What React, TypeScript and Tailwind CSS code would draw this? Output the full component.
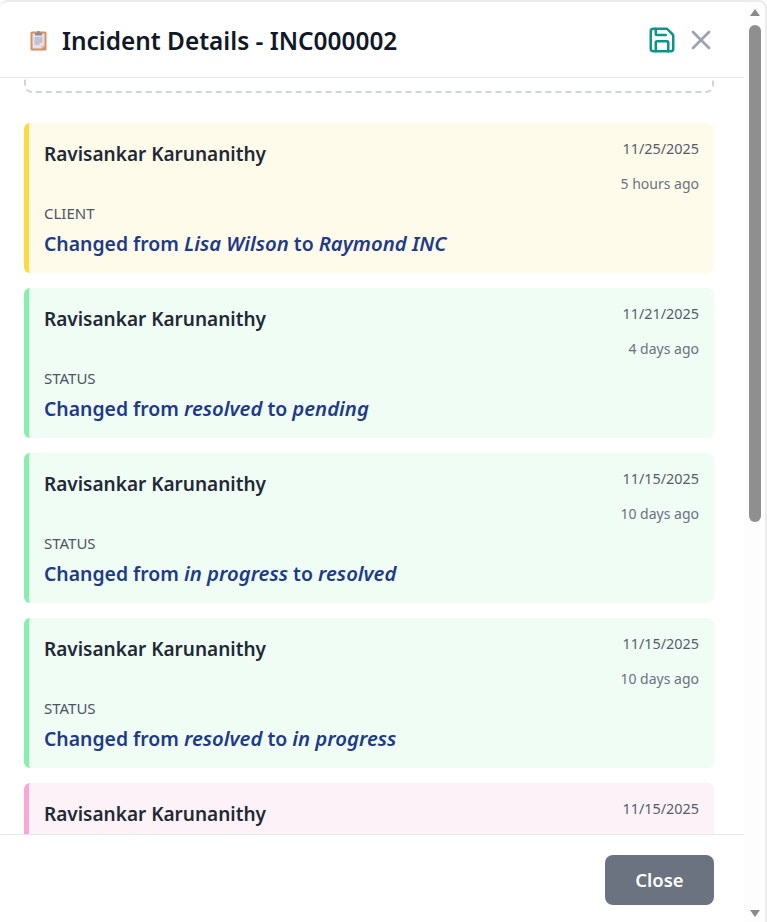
import { Save, X } from 'lucide-react'

type Entry = {
  date: string
  ago?: string
  label?: string
  from?: string
  to?: string
  tone: string
}

const entries: Entry[] = [
  { date: '11/25/2025', ago: '5 hours ago', label: 'CLIENT', from: 'Lisa Wilson', to: 'Raymond INC', tone: 'border-[#ffd93d] bg-[#fffbeb]' },
  { date: '11/21/2025', ago: '4 days ago', label: 'STATUS', from: 'resolved', to: 'pending', tone: 'border-[#86efac] bg-[#f0fdf4]' },
  { date: '11/15/2025', ago: '10 days ago', label: 'STATUS', from: 'in progress', to: 'resolved', tone: 'border-[#86efac] bg-[#f0fdf4]' },
  { date: '11/15/2025', ago: '10 days ago', label: 'STATUS', from: 'resolved', to: 'in progress', tone: 'border-[#86efac] bg-[#f0fdf4]' },
  // last one runs under the footer, only its top row shows
  { date: '11/15/2025', tone: 'border-[#f9a8d4] bg-[#fdf2f8]' },
]

function ClipboardIcon() {
  return (
    <svg width="17" height="21" viewBox="0 0 17 21" className="shrink-0">
      <rect x="0.5" y="1.5" width="16" height="19" rx="1.5" fill="#d98f5c" />
      <path d="M2.5 3.5h12v13l-3 2h-9z" fill="#e6e1ee" />
      <path d="M11.5 18.5l3-2v-1h-3z" fill="#f1b98c" />
      <path d="M5 5.5V3h2l.6-2h1.8l.6 2h2v2.5z" fill="#8b8b94" />
      <path d="M4.5 8h8M4.5 10h8M4.5 12h8M4.5 14h5" stroke="#9c98a8" strokeWidth="0.9" />
    </svg>
  )
}

function HistoryCard({ entry }: { entry: Entry }) {
  return (
    <div
      className={`shrink-0 border-l-[5px] pl-[15px] pr-[15px] pt-[15px] ${entry.tone} ${
        entry.ago ? 'h-[150px] rounded-md' : 'h-[51px] rounded-t-md'
      }`}
    >
      <div className="flex items-start justify-between">
        <div className="text-[19px] leading-[33px] font-semibold text-[#1f2937]">Ravisankar Karunanithy</div>
        <div className="text-right text-[14.4px] leading-[21px]">
          <div className="text-[#565d6a]">{entry.date}</div>
          {entry.ago && <div className="mt-[14px] text-[14px] text-[#6b7280]">{entry.ago}</div>}
        </div>
      </div>
      {entry.label && (
        <>
          <div className="mt-[9px] text-[15px] leading-[21px] text-[#4b5563]">{entry.label}</div>
          <div className="mt-[4px] text-[19.4px] leading-[30px] font-semibold text-[#1e3a8a]">
            Changed from <em className="text-[20.3px]">{entry.from}</em> to <em className="text-[20.3px]">{entry.to}</em>
          </div>
        </>
      )}
    </div>
  )
}

export default function App() {
  return (
    <div className="flex h-[922px] w-[767px] overflow-hidden rounded-t-lg border-t-2 border-r-2 border-[#ececec] bg-white font-['Noto_Sans',sans-serif]">
      <div className="flex w-[744px] flex-col">
        <header className="flex h-[76px] shrink-0 items-center justify-between border-b border-[#e5e7eb] pl-[30px] pr-[27px]">
          <div className="flex items-center gap-[15px] pt-[2px]">
            <ClipboardIcon />
            <h2 className="text-[24.4px] leading-[36px] font-semibold text-[#111827]">Incident Details - INC000002</h2>
          </div>
          <div className="flex items-center gap-[8px]">
            <Save size={30} strokeWidth={2} className="text-[#0d9488]" />
            <X size={32} strokeWidth={2} className="text-[#9ca3af]" />
          </div>
        </header>
        <main className="flex min-h-0 flex-1 flex-col gap-[15px] overflow-hidden pl-[24px] pr-[30px]">
          <div className="mb-[15px] mt-[-30px] h-[45px] shrink-0 rounded-lg border-2 border-dashed border-[#d1d5db]" />
          {entries.map((entry, i) => (
            <HistoryCard key={i} entry={entry} />
          ))}
        </main>
        <footer className="flex h-[88px] shrink-0 items-start justify-end border-t border-[#e5e7eb] pr-[30px] pt-[20px]">
          <button className="h-[50px] w-[109px] rounded-lg bg-[#6b7280] text-[18.5px] font-semibold text-white">Close</button>
        </footer>
      </div>
      <div className="flex w-[21px] flex-col items-center bg-[#fdfdfd] pt-[7px]">
        <div className="h-0 w-0 border-x-[5px] border-b-[7px] border-x-transparent border-b-[#8a8a8a]" />
        <div className="mt-[9px] h-[497px] w-[12px] rounded-full bg-[#8f8f8f]" />
        <div className="mt-auto mb-[5px] h-0 w-0 border-x-[5px] border-t-[7px] border-x-transparent border-t-[#8a8a8a]" />
      </div>
    </div>
  )
}
